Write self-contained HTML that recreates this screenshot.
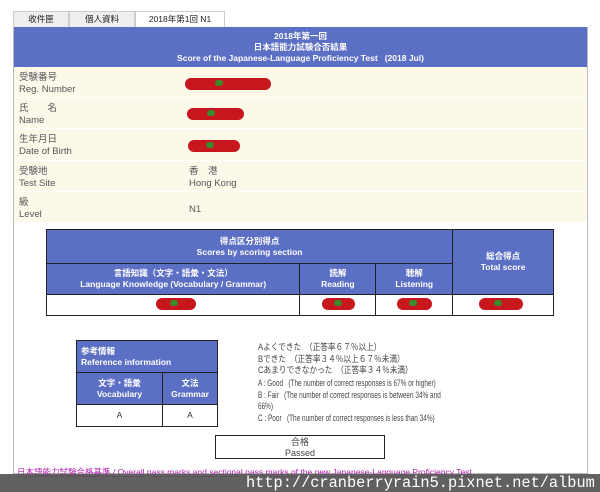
<!DOCTYPE html>
<html><head><meta charset="utf-8"><style>
*{margin:0;padding:0;box-sizing:border-box}
body{width:600px;height:492px;background:#fff;font-family:"Liberation Sans","Noto Sans CJK JP",sans-serif;font-size:9px;color:#333;position:relative;overflow:hidden}
.a{position:absolute}
.tab{position:absolute;top:11px;height:16px;background:#eee;border:1px solid #ccc;border-bottom:none;text-align:center;line-height:15px;font-size:8.5px;color:#222}
.hdr{background:#5b6fc4;color:#fff;font-weight:bold;text-align:center}
.row{position:absolute;left:14px;width:573px;background:#fcf9ea;border-bottom:1px solid #fff;color:#555;font-size:9.5px;line-height:12px;padding:5px 5px}
.blob{position:absolute;height:12px;border-radius:6px;background:#c8161e;overflow:hidden}
.blob:after{content:"";position:absolute;left:35%;top:2px;width:8px;height:6px;border-radius:3px;background:#3a8a2a}
table{border-collapse:collapse;position:absolute}
td{border:1.5px solid #222;text-align:center;font-size:8.5px;line-height:11px}
td.h{background:#5b6fc4;color:#fff;font-weight:bold}
.sx{transform:scaleX(.715);transform-origin:0 0}
</style></head><body>
<div class="tab" style="left:13px;width:56px">收件匣</div>
<div class="tab" style="left:69px;width:66px">個人資料</div>
<div class="tab" style="left:135px;width:90px;background:#fff">2018年第1回 N1</div>
<div class="a" style="left:13px;top:27px;width:575px;height:447px;border:1px solid #bbb;border-top:none"></div>
<div class="a hdr" style="left:14px;top:27px;width:573px;height:40px;padding-top:4px;font-size:8.5px;line-height:11px">2018年第一回<br>日本語能力試験合否結果<br>Score of the Japanese-Language Proficiency Test &nbsp;&nbsp;(2018 Jul)</div>
<div class="row" style="top:67px;height:31px">受験番号<br>Reg. Number</div>
<div class="row" style="top:98px;height:31px">氏　　名<br>Name</div>
<div class="row" style="top:129px;height:32px">生年月日<br>Date of Birth</div>
<div class="row" style="top:161px;height:31px">受験地<br>Test Site</div>
<div class="row" style="top:192px;height:31px">級<br>Level</div>
<div class="blob" style="left:185px;top:78px;width:86px"></div>
<div class="blob" style="left:187px;top:108px;width:57px"></div>
<div class="blob" style="left:188px;top:140px;width:52px"></div>
<div class="a" style="left:189px;top:166px;line-height:12px;color:#555;font-size:9.5px">香　港<br>Hong Kong</div>
<div class="a" style="left:189px;top:204px;color:#555;font-size:9.5px">N1</div>
<table style="left:46px;top:229px;width:508px">
<tr style="height:34px"><td class="h" colspan="3">得点区分別得点<br>Scores by scoring section</td><td class="h" rowspan="2" style="width:101px">総合得点<br>Total score</td></tr>
<tr style="height:31px"><td class="h" style="width:254px">言語知識（文字・語彙・文法）<br>Language Knowledge (Vocabulary / Grammar)</td><td class="h" style="width:76px">読解<br>Reading</td><td class="h" style="width:77px">聴解<br>Listening</td></tr>
<tr style="height:21px"><td></td><td></td><td></td><td></td></tr>
</table>
<div class="blob" style="left:156px;top:298px;width:40px"></div>
<div class="blob" style="left:322px;top:298px;width:33px"></div>
<div class="blob" style="left:397px;top:298px;width:35px"></div>
<div class="blob" style="left:479px;top:298px;width:44px"></div>
<table style="left:76px;top:340px;width:142px">
<tr style="height:32px"><td class="h" colspan="2" style="text-align:left;padding-left:4px">参考情報<br>Reference information</td></tr>
<tr style="height:32px"><td class="h" style="width:86px">文字・語彙<br>Vocabulary</td><td class="h">文法<br>Grammar</td></tr>
<tr style="height:22px"><td>A</td><td>A</td></tr>
</table>
<div class="a" style="left:258px;top:342px;line-height:11.5px;color:#444;font-size:9px;white-space:nowrap;transform:scaleX(.85);transform-origin:0 0">Aよくできた　（正答率６７％以上）<br>Bできた　（正答率３４％以上６７％未満）<br>Cあまりできなかった　（正答率３４％未満）</div>
<div class="a sx" style="left:258px;top:378px;width:262px;line-height:11.5px;color:#444;font-size:9px">A : Good &nbsp;&nbsp;(The number of correct responses is 67% or higher)<br>B : Fair &nbsp;&nbsp;(The number of correct responses is between 34% and 66%)<br>C : Poor &nbsp;&nbsp;(The number of correct responses is less than 34%)</div>
<div class="a" style="left:215px;top:435px;width:170px;height:24px;border:1px solid #222;text-align:center;line-height:11px;padding-top:1px;color:#444">合格<br>Passed</div>
<div class="a" style="left:17px;top:466px;color:#b020b0;text-decoration:underline;font-size:8.5px;white-space:nowrap">日本語能力試験合格基準 / Overall pass marks and sectional pass marks of the new Japanese-Language Proficiency Test</div>
<div class="a" style="left:0;top:474px;width:600px;height:18px;background:#555;opacity:.93"></div>
<div class="a" style="left:246px;top:475px;color:#fff;font-family:'Liberation Mono',monospace;font-size:15.3px;line-height:16px;white-space:nowrap">http://cranberryrain5.pixnet.net/album</div>
</body></html>
